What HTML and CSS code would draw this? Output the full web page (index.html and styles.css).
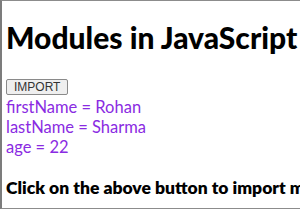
FILE: index.html
```html
<!DOCTYPE html>
<html lang="en">
<head>
    <meta charset="UTF-8">
    <title>Modules in JavaScript</title>
    <link rel="stylesheet" href="styles.css">
</head>
<body>
    <div class="frame">
        <h1>Modules in JavaScript</h1>
        <button class="import-btn">IMPORT</button>
        <div class="result">
            <div>firstName = Rohan</div>
            <div>lastName = Sharma</div>
            <div>age = 22</div>
        </div>
        <h3>Click on the above button to import module</h3>
    </div>
</body>
</html>
```

FILE: styles.css
```css
* {
    margin: 0;
    padding: 0;
    box-sizing: border-box;
}

body {
    background-color: #fff;
    font-family: Lato, 'Noto Sans', sans-serif;
    overflow: hidden;
}

.frame {
    height: 209px;
    border-top: 1px solid #8c8c8c;
    border-left: 2px solid #7c7c7c;
    border-bottom: 1px solid #8c8c8c;
    padding-left: 4px;
    overflow: hidden;
    white-space: nowrap;
}

h1 {
    font-size: 30px;
    line-height: 34px;
    font-weight: 900;
    color: #000;
    margin: 19px 0 25px;
}

.import-btn {
    font-family: 'Liberation Sans', Arial, sans-serif;
    font-size: 12px;
    color: #333;
    background-color: #efefef;
    border: 1px solid #8a8a8a;
    border-radius: 2px;
    padding: 1px 7px;
    height: 16px;
    line-height: 12px;
    display: block;
}

.result {
    color: #8a2be2;
    font-size: 16.5px;
    line-height: 20px;
    margin-top: 2px;
}

h3 {
    font-size: 17.5px;
    line-height: 24px;
    font-weight: 800;
    color: #000;
    margin-top: 19px;
}
```
